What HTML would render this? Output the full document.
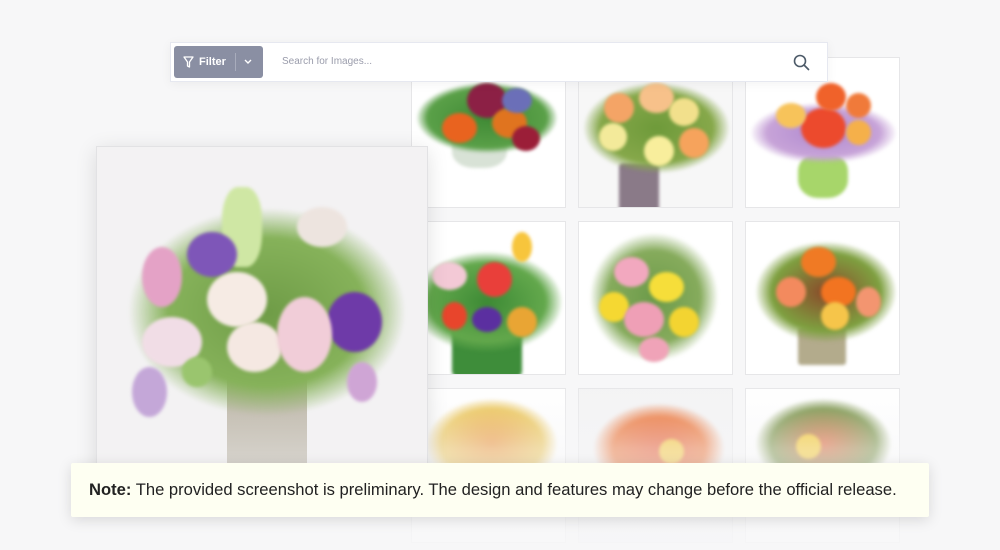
<!DOCTYPE html>
<html><head><meta charset="utf-8"><style>
*{margin:0;padding:0;box-sizing:border-box}
body{width:1000px;height:550px;background:#f7f7f8;position:relative;overflow:hidden;font-family:"Liberation Sans",sans-serif}
.t{position:absolute;background:#fff;border:1px solid #e6e6e8;overflow:hidden}
.t i{position:absolute;border-radius:50%;display:block;filter:blur(1.5px)}
.v{position:absolute;border-radius:4px 4px 10px 10px}
.fade{position:absolute;left:0;top:380px;width:1000px;height:170px;background:linear-gradient(rgba(247,247,248,0),rgba(247,247,248,.55) 40%,rgba(247,247,248,.9))}
</style></head><body>

<div class="t" style="left:411px;top:57px;width:155px;height:151px">
<i style="left:40px;top:70px;width:55px;height:40px;background:#d8e2d6;border-radius:40%"></i>
<i style="left:5px;top:25px;width:140px;height:70px;background:radial-gradient(#3f8a35,#5aa048 60%,rgba(90,160,72,0) 72%)"></i>
<i style="left:55px;top:25px;width:40px;height:35px;background:#8c2045"></i>
<i style="left:30px;top:55px;width:35px;height:30px;background:#e9631f"></i>
<i style="left:80px;top:50px;width:35px;height:30px;background:#e0741f"></i>
<i style="left:90px;top:30px;width:30px;height:25px;background:#6b6fb8"></i>
<i style="left:100px;top:68px;width:28px;height:25px;background:#9b1e38"></i>
</div>
<div class="t" style="left:578px;top:57px;width:155px;height:151px;background:#f7f7f7">
<i style="left:40px;top:105px;width:40px;height:50px;background:#8a7a88;border-radius:4px"></i>
<i style="left:5px;top:25px;width:145px;height:90px;background:radial-gradient(#6e9a3a,#86a84a 55%,rgba(134,168,74,0) 72%)"></i>
<i style="left:25px;top:35px;width:30px;height:30px;background:#f4a466"></i>
<i style="left:60px;top:25px;width:35px;height:30px;background:#f7c18a"></i>
<i style="left:90px;top:40px;width:30px;height:28px;background:#f2e08c"></i>
<i style="left:20px;top:65px;width:28px;height:28px;background:#f3ea9a"></i>
<i style="left:65px;top:78px;width:30px;height:30px;background:#f8ee9c"></i>
<i style="left:100px;top:70px;width:30px;height:30px;background:#f6a35c"></i>
</div>
<div class="t" style="left:745px;top:57px;width:155px;height:151px">
<i style="left:52px;top:95px;width:50px;height:45px;background:#a7d66a;border-radius:40%"></i>
<i style="left:5px;top:45px;width:145px;height:60px;background:radial-gradient(#b08ad0,#c7a3d8 55%,rgba(199,163,216,0) 72%)"></i>
<i style="left:55px;top:50px;width:45px;height:40px;background:#ec4a2d"></i>
<i style="left:70px;top:25px;width:30px;height:28px;background:#f0622a"></i>
<i style="left:30px;top:45px;width:30px;height:25px;background:#f7c35a"></i>
<i style="left:100px;top:35px;width:25px;height:25px;background:#f07a3a"></i>
<i style="left:100px;top:62px;width:25px;height:25px;background:#f5b04a"></i>
</div>
<div class="t" style="left:411px;top:221px;width:155px;height:154px">
<i style="left:40px;top:105px;width:70px;height:50px;background:#3e8d3a;border-radius:6px"></i>
<i style="left:0;top:30px;width:150px;height:100px;background:radial-gradient(#3d8a35,#63a84c 55%,rgba(99,168,76,0) 72%)"></i>
<i style="left:65px;top:40px;width:35px;height:35px;background:#e93f3a"></i>
<i style="left:20px;top:40px;width:35px;height:28px;background:#f3c9d6"></i>
<i style="left:30px;top:80px;width:25px;height:28px;background:#e8452c"></i>
<i style="left:60px;top:85px;width:30px;height:25px;background:#5b2fa0"></i>
<i style="left:95px;top:85px;width:30px;height:30px;background:#e9a534"></i>
<i style="left:100px;top:10px;width:20px;height:30px;background:#f7c53c"></i>
</div>
<div class="t" style="left:578px;top:221px;width:155px;height:154px">
<i style="left:10px;top:10px;width:130px;height:130px;background:radial-gradient(#6c9b4a,#86ab5c 50%,rgba(134,171,92,0) 70%)"></i>
<i style="left:35px;top:35px;width:35px;height:30px;background:#f2a8bf"></i>
<i style="left:70px;top:50px;width:35px;height:30px;background:#f6de3a"></i>
<i style="left:20px;top:70px;width:30px;height:30px;background:#f5d832"></i>
<i style="left:45px;top:80px;width:40px;height:35px;background:#ef9fb6"></i>
<i style="left:90px;top:85px;width:30px;height:30px;background:#f3d431"></i>
<i style="left:60px;top:115px;width:30px;height:25px;background:#f0a3b8"></i>
</div>
<div class="t" style="left:745px;top:221px;width:155px;height:154px">
<i style="left:52px;top:105px;width:48px;height:38px;background:#b3ab8c;border-radius:3px"></i>
<i style="left:10px;top:20px;width:140px;height:100px;background:radial-gradient(#8a4a2a,#7ea040 55%,rgba(126,160,64,0) 72%)"></i>
<i style="left:55px;top:25px;width:35px;height:30px;background:#f07a24"></i>
<i style="left:30px;top:55px;width:30px;height:30px;background:#f38a5e"></i>
<i style="left:75px;top:55px;width:35px;height:30px;background:#f27421"></i>
<i style="left:75px;top:80px;width:28px;height:28px;background:#f6c54a"></i>
<i style="left:110px;top:65px;width:25px;height:30px;background:#f39570"></i>
</div>
<div class="t" style="left:411px;top:388px;width:155px;height:155px">
<i style="left:15px;top:10px;width:130px;height:90px;background:radial-gradient(#e98a2a,#e9c04a 55%,rgba(233,192,74,0) 72%)"></i>
</div>
<div class="t" style="left:578px;top:388px;width:155px;height:155px;background:#f3f3f4">
<i style="left:15px;top:15px;width:130px;height:90px;background:radial-gradient(#e24a22,#e96a2a 50%,rgba(233,106,42,0) 72%)"></i>
<i style="left:80px;top:50px;width:25px;height:25px;background:#f3c12c"></i>
</div>
<div class="t" style="left:745px;top:388px;width:155px;height:155px">
<i style="left:10px;top:10px;width:135px;height:90px;background:radial-gradient(#d9582a,#6f8a3a 55%,rgba(111,138,58,0) 72%)"></i>
<i style="left:50px;top:45px;width:25px;height:25px;background:#f2c21c"></i>
</div>
<div class="fade"></div>

<div class="t" style="left:96px;top:146px;width:332px;height:330px;background:#f3f2f3;border:1px solid #e2e2e4;box-shadow:0 4px 20px rgba(0,0,0,.12)">
<div class="v" style="left:130px;top:230px;width:80px;height:100px;background:linear-gradient(#b5ad9c,#d8d5cf);opacity:.9"></div>
<i style="left:30px;top:60px;width:280px;height:210px;background:radial-gradient(#6f9c47,#86b25a 50%,rgba(134,178,90,0) 70%)"></i>
<i style="left:125px;top:40px;width:40px;height:80px;border-radius:40%;background:#cfe7a4"></i>
<i style="left:90px;top:85px;width:50px;height:45px;background:#7e56b8"></i>
<i style="left:200px;top:60px;width:50px;height:40px;background:#ede4df"></i>
<i style="left:45px;top:100px;width:40px;height:60px;background:#e4a2c6"></i>
<i style="left:110px;top:125px;width:60px;height:55px;background:#f6ebe4"></i>
<i style="left:230px;top:145px;width:55px;height:60px;background:#6e3aa8"></i>
<i style="left:45px;top:170px;width:60px;height:50px;background:#f1dde6"></i>
<i style="left:130px;top:175px;width:55px;height:50px;background:#f5e8e2"></i>
<i style="left:180px;top:150px;width:55px;height:75px;background:#f1cdd8"></i>
<i style="left:35px;top:220px;width:35px;height:50px;background:#c4a7d8"></i>
<i style="left:250px;top:215px;width:30px;height:40px;background:#cfa5d5"></i>
<i style="left:85px;top:210px;width:30px;height:30px;background:#9ac56e"></i>
</div>

<div style="position:absolute;left:170px;top:42px;width:658px;height:40px;background:#fff;border:1px solid #e6e8f0;box-shadow:0 2px 10px rgba(0,0,0,.05)"></div>
<div style="position:absolute;left:174px;top:46px;width:89px;height:32px;background:#8a8fa3;border-radius:3px;color:#fff;font-size:11px;font-weight:bold">
<svg style="position:absolute;left:9px;top:10px" width="11" height="12" viewBox="0 0 11 12"><path d="M1 1h9L6.5 6v5L4.5 10V6z" fill="none" stroke="#fff" stroke-width="1.3" stroke-linejoin="round"/></svg>
<span style="position:absolute;left:25px;top:10px">Filter</span>
<div style="position:absolute;left:61px;top:7px;width:1px;height:18px;background:#a8acbc"></div>
<svg style="position:absolute;left:70px;top:13px" width="8" height="6" viewBox="0 0 8 6"><path d="M1 1l3 3 3-3" fill="none" stroke="#fff" stroke-width="1.4"/></svg>
</div>
<div style="position:absolute;left:282px;top:56px;font-size:10px;color:#9a9cab">Search for Images...</div>
<svg style="position:absolute;left:793px;top:54px" width="17" height="17" viewBox="0 0 17 17"><circle cx="7" cy="7" r="5.5" fill="none" stroke="#4c5a68" stroke-width="1.6"/><path d="M11 11l4.5 4.5" stroke="#4c5a68" stroke-width="1.7" stroke-linecap="round"/></svg>

<div style="position:absolute;left:71px;top:463px;width:858px;height:54px;background:#fefff2;border-radius:2px;box-shadow:0 3px 14px rgba(0,0,0,.13);font-size:16.6px;color:#222;line-height:54px;padding-left:18px;letter-spacing:0;white-space:nowrap"><b>Note:</b> The provided screenshot is preliminary. The design and features may change before the official release.</div>
</body></html>
